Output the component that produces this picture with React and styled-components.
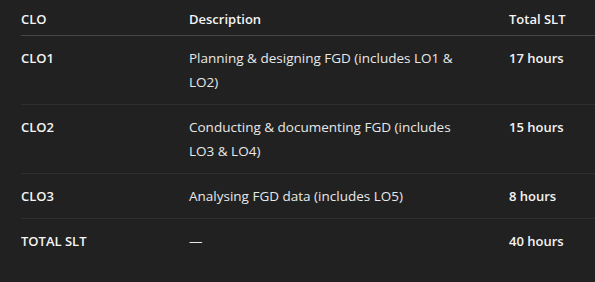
import React from "react";
import styled, { createGlobalStyle } from "styled-components";

const GlobalStyle = createGlobalStyle`
  html, body {
    margin: 0;
    background: #212121;
  }
  body {
    font-family: "Open Sans", "Noto Sans", Arial, sans-serif;
    color: #ececec;
  }
`;

const rows = [
  { clo: "CLO1", desc: "Planning & designing FGD (includes LO1 & LO2)", slt: "17 hours" },
  { clo: "CLO2", desc: "Conducting & documenting FGD (includes LO3 & LO4)", slt: "15 hours" },
  { clo: "CLO3", desc: "Analysing FGD data (includes LO5)", slt: "8 hours" },
  { clo: "TOTAL SLT", desc: "—", slt: "40 hours", last: true },
];

const Wrapper = styled.div`
  padding-left: 21px;
  height: 282px;
  box-sizing: border-box;
`;

const Row = styled.div`
  display: grid;
  grid-template-columns: 168px 320px 1fr;
  padding: ${(p) => (p.$head ? "7px 0 4px" : "10px 0")};
  border-bottom: 1px solid ${(p) => (p.$head ? "#454545" : p.$last ? "transparent" : "#2e2e2e")};
  line-height: 24px;
`;

const Cell = styled.div`
  font-size: ${(p) => (p.$bold ? "13px" : "13.5px")};
  font-weight: ${(p) => (p.$bold ? 600 : 400)};
  color: ${(p) => (p.$bold ? "#f4f4f4" : "#e8e8e8")};
  padding-right: ${(p) => (p.$wide ? "40px" : "0")};
`;

export default function App() {
  return (
    <>
      <GlobalStyle />
      <Wrapper>
        <Row $head>
          <Cell $bold>CLO</Cell>
          <Cell $bold>Description</Cell>
          <Cell $bold>Total SLT</Cell>
        </Row>
        {rows.map((r) => (
          <Row key={r.clo} $last={r.last}>
            <Cell $bold>{r.clo}</Cell>
            <Cell $wide>{r.desc}</Cell>
            <Cell $bold>{r.slt}</Cell>
          </Row>
        ))}
      </Wrapper>
    </>
  );
}
